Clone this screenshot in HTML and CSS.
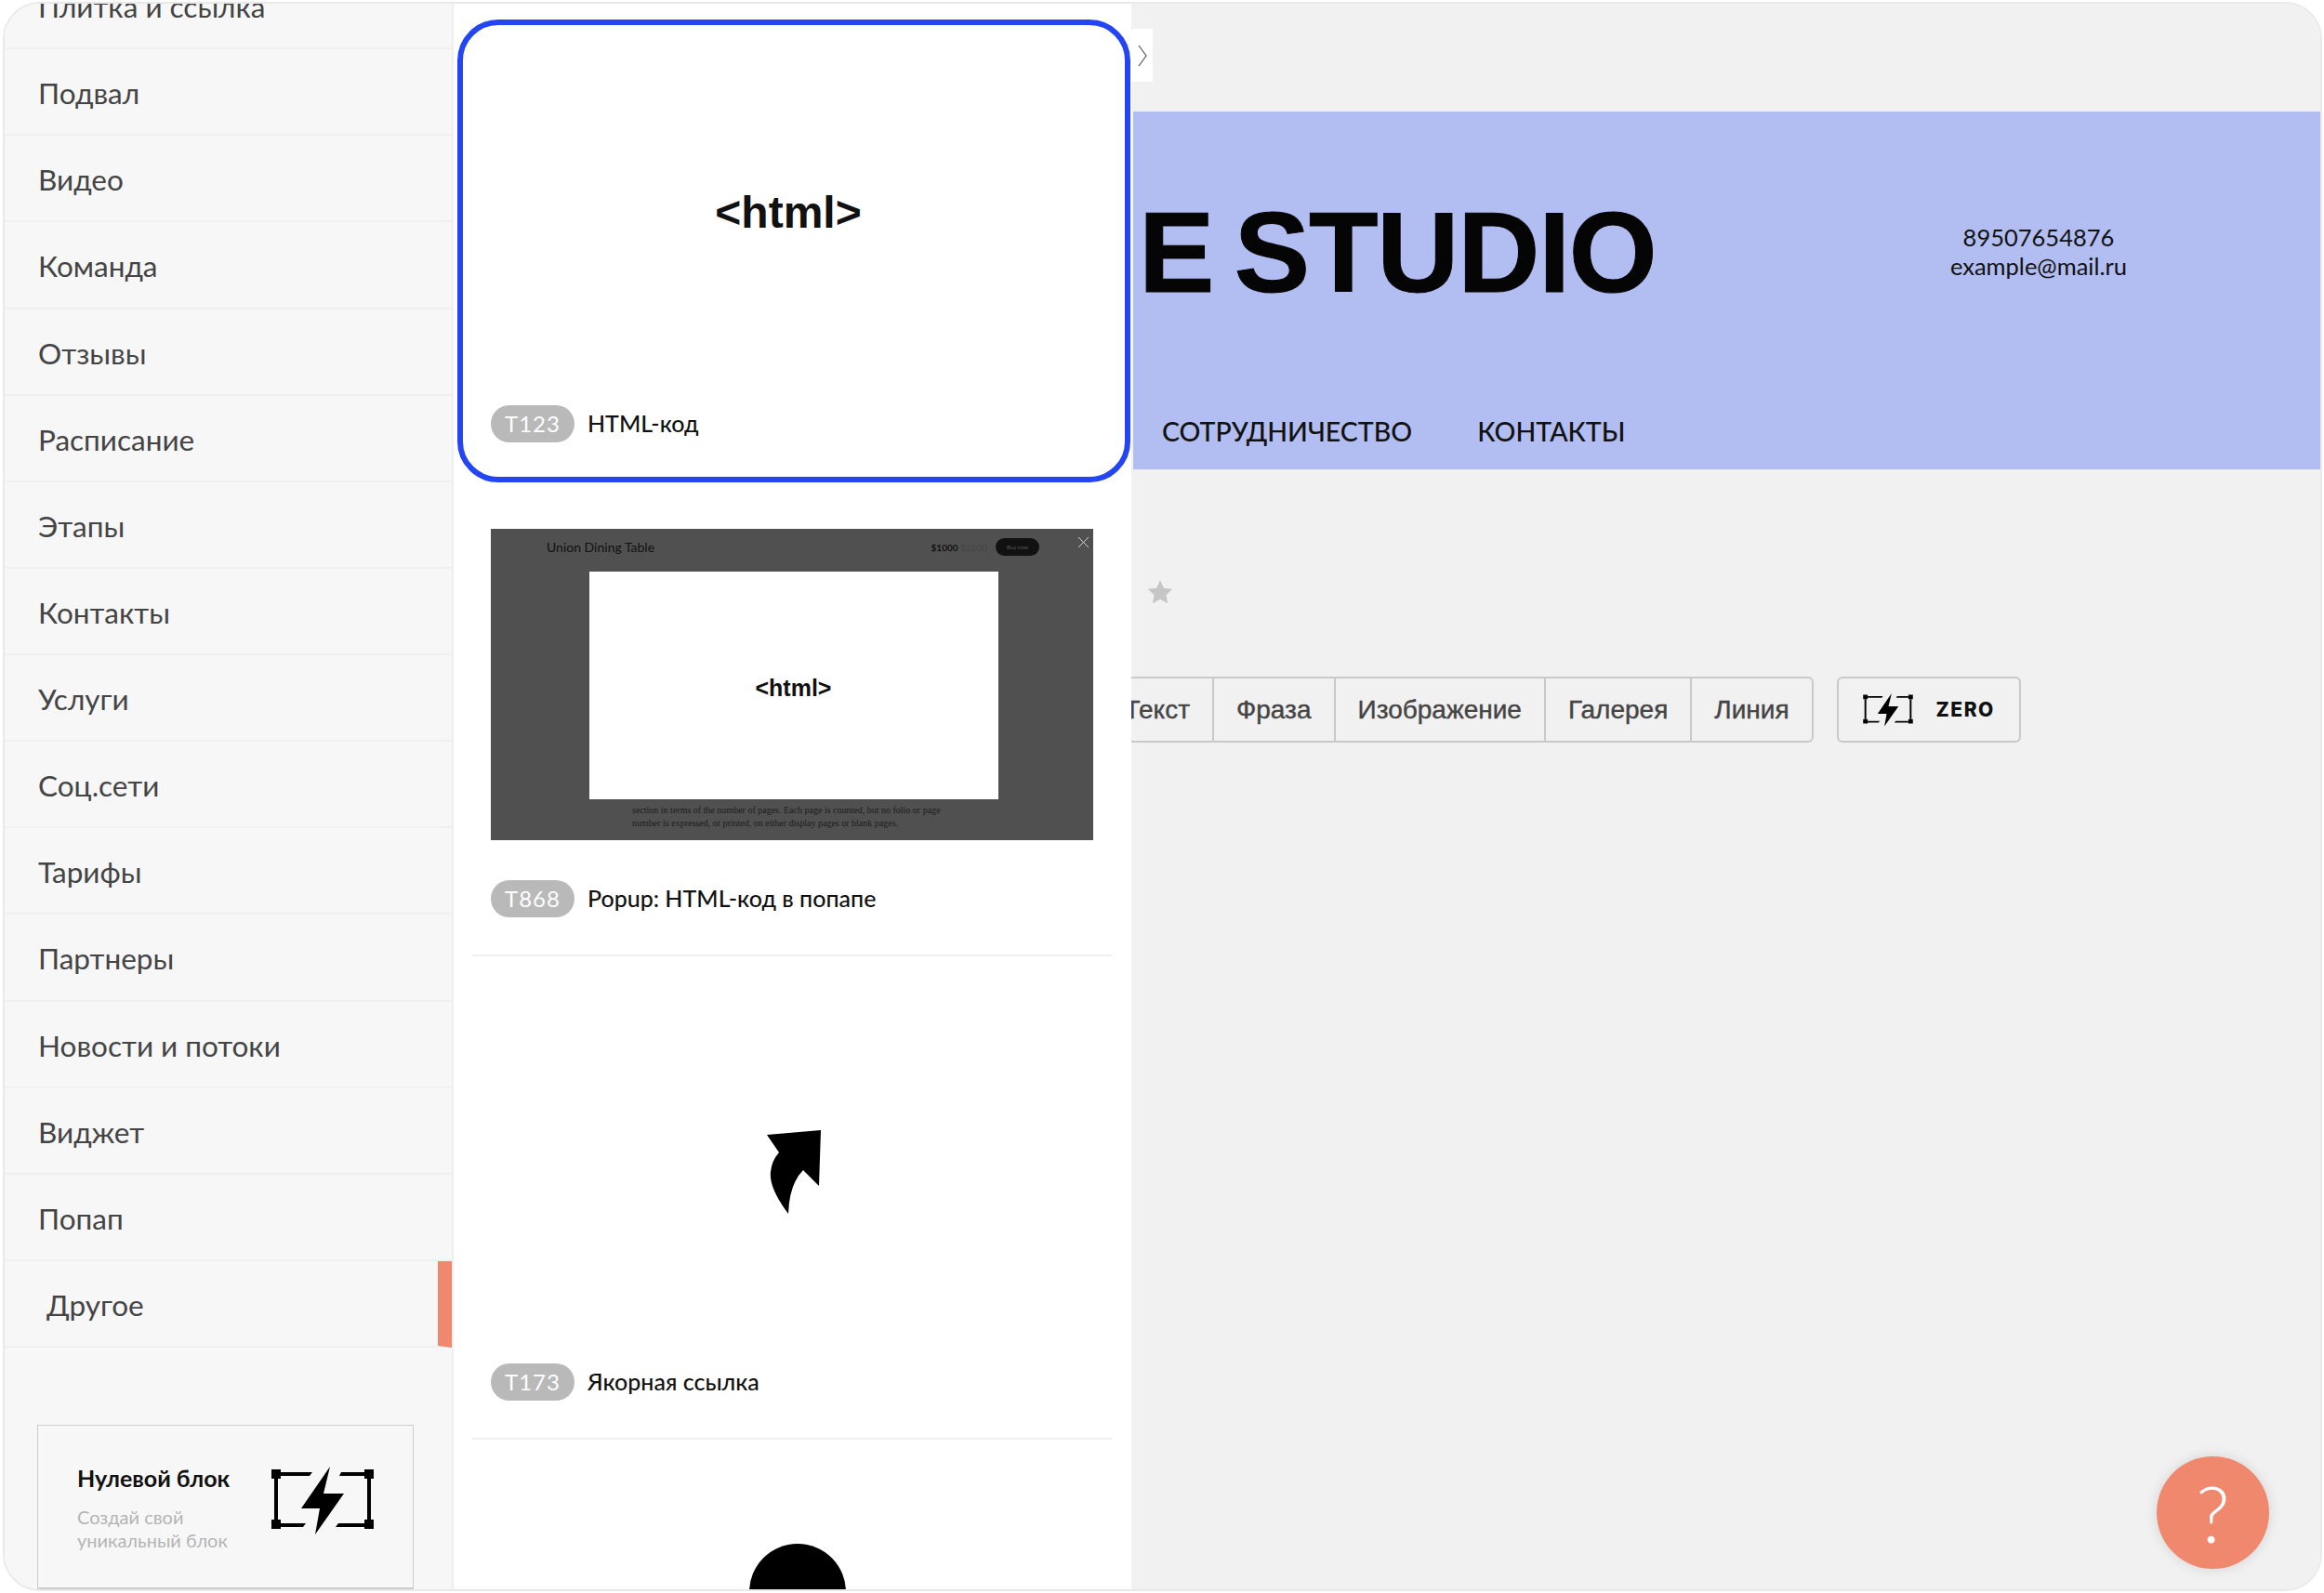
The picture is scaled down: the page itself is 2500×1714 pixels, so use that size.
FILE: index.html
```html
<!DOCTYPE html>
<html lang="ru">
<head>
  <meta charset="UTF-8" />
  <meta name="viewport" content="width=device-width, initial-scale=1.0"/>
  <title>Библиотека блоков</title>
  <link rel="stylesheet" href="styles.css">
</head>
<body>
  <div class="window">
    <aside class="sidebar">
      <ul class="cats">
        <li>Плитка и ссылка</li>
        <li>Подвал</li>
        <li>Видео</li>
        <li>Команда</li>
        <li>Отзывы</li>
        <li>Расписание</li>
        <li>Этапы</li>
        <li>Контакты</li>
        <li>Услуги</li>
        <li>Соц.сети</li>
        <li>Тарифы</li>
        <li>Партнеры</li>
        <li>Новости и потоки</li>
        <li>Виджет</li>
        <li>Попап</li>
        <li class="active">Другое</li>
      </ul>

      <div class="zero-card">
        <div>
          <div class="zero-title">Нулевой блок</div>
          <div class="zero-sub">Создай свой<br>уникальный блок</div>
        </div>
        <svg class="zero-icon" viewBox="0 0 110 74">
          <path d="M0 3h10v10H0zM100 3h10v10h-10zM0 57h10v10H0zM100 57h10v10h-10z"/>
          <path d="M10 6h34l-3 4H10zM75 6h25v4H73zM3 13h4v44H3zM103 13h4v44h-4zM10 61h27l-3 4H10zM72 61h28v4H69z"/>
          <path d="M63 0L32 45h20l-5 28 31-44H56z"/>
        </svg>
      </div>
    </aside>

    <section class="panel">
      <article class="block selected">
        <div class="thumb thumb-html"><span class="html-mark">&lt;html&gt;</span></div>
        <div class="block-meta">
          <span class="badge">T123</span>
          <span class="block-name">HTML-код</span>
        </div>
      </article>

      <article class="block">
        <div class="thumb thumb-popup">
          <div class="popup-head">
            <span class="popup-title">Union Dining Table</span>
            <span class="popup-price">$1000 <s>$3200</s></span>
            <span class="popup-buy">Buy now</span>
          </div>
          <div class="popup-body"><span class="html-mark small">&lt;html&gt;</span></div>
          <p class="popup-text">section in terms of the number of pages. Each page is counted, but no folio or page<br>number is expressed, or printed, on either display pages or blank pages.</p>
          <span class="popup-close">
            <svg viewBox="0 0 14 14"><path d="M1 1l12 12M13 1L1 13"/></svg>
          </span>
        </div>
        <div class="block-meta">
          <span class="badge">T868</span>
          <span class="block-name">Popup: HTML-код в попапе</span>
        </div>
      </article>

      <article class="block">
        <div class="thumb thumb-anchor">
          <svg class="anchor-icon" viewBox="0 0 58 90"><path d="M0 5L58 0 56 60 39 43Q24 58 23 90 2 62 4 45 5 33 13 24z"/></svg>
        </div>
        <div class="block-meta">
          <span class="badge">T173</span>
          <span class="block-name">Якорная ссылка</span>
        </div>
      </article>

      <div class="next-thumb"><span class="black-dot"></span></div>
    </section>

    <main class="preview">
      <button class="panel-tab">
        <svg viewBox="0 0 10 24"><path d="M1 1l8 11-8 11"/></svg>
      </button>

      <header class="hero">
        <div class="hero-top">
          <div class="hero-logo">E STUDIO</div>
          <div class="hero-contacts">
            <div>89507654876</div>
            <div>example@mail.ru</div>
          </div>
        </div>
        <nav class="hero-nav">
          <a>Сотрудничество</a>
          <a>Контакты</a>
        </nav>
      </header>

      <svg class="star" viewBox="0 0 24 24"><path d="M12 1l3.4 7.3 7.9 1-5.800 5.400 1.500 7.900L12 18.700l-7 3.900 1.500-7.900L.7 9.300l7.900-1z"/></svg>

      <div class="tools">
        <div class="tool-group">
          <span class="tool tool-first">Текст</span>
          <span class="tool">Фраза</span>
          <span class="tool">Изображение</span>
          <span class="tool">Галерея</span>
          <span class="tool">Линия</span>
        </div>
        <div class="tool-zero">
          <svg viewBox="0 0 110 74">
            <path d="M0 3h10v10H0zM100 3h10v10h-10zM0 57h10v10H0zM100 57h10v10h-10z"/>
            <path d="M10 6h34l-3 4H10zM75 6h25v4H73zM3 13h4v44H3zM103 13h4v44h-4zM10 61h27l-3 4H10zM72 61h28v4H69z"/>
            <path d="M63 0L32 45h20l-5 28 31-44H56z"/>
          </svg>
          <span>ZERO</span>
        </div>
      </div>

      <button class="help">?</button>
    </main>
  </div>
</body>
</html>
```

FILE: styles.css
```css
* {
  box-sizing: border-box;
}

html, body {
  height: 100%;
}

body {
  margin: 0;
  padding: 2px 2px 2px 3px;
  background: #fff;
  font-family: 'Lato', 'Noto Sans', sans-serif;
  color: #444;
}

.window {
  display: flex;
  height: 100%;
  border: 2px solid #e9e9e9;
  border-radius: 40px;
  overflow: hidden;
}

/* left column */
.sidebar {
  width: 483px;
  flex: none;
  display: flex;
  flex-direction: column;
  background: #f7f7f7;
  border-right: 2px solid #efefef;
  overflow: hidden;
}

.cats {
  list-style: none;
  margin: -44px 0 0;
  padding: 0;
}

.cats li {
  height: 93.13px;
  line-height: 94px;
  padding-left: 36px;
  font-size: 31.500px;
  color: #444;
  border-bottom: 2px solid #f0f0f0;
}

.cats li.active {
  padding-left: 45px;
  border-right: 15px solid #f0886e;
}

.zero-card {
  margin: auto 41px 0 35px;
  height: 177px;
  padding: 41px 42px 0 42px;
  display: flex;
  justify-content: space-between;
  border: 1px solid #ccc;
  border-bottom-width: 2px;
}

.zero-title {
  font-size: 25px;
  font-weight: 700;
  color: #111;
  line-height: 30px;
  margin-bottom: 15px;
}

.zero-sub {
  font-size: 20px;
  line-height: 25px;
  color: #b4b4b4;
}

.zero-icon {
  width: 110px;
  height: 74px;
  flex: none;
  margin-top: 3px;
  fill: #000;
}

/* block list */
.panel {
  width: 729px;
  flex: none;
  background: #fff;
  padding-top: 17px;
  overflow: hidden;
}

.block {
  margin: 0 21px 0 20px;
  padding: 50px 20px 40px;
  border-bottom: 2px solid #efefef;
}

.block.selected {
  margin: 0 1px 0 4px;
  padding: 44px 30px 36px;
  height: 498px;
  border: 6px solid #2445f2;
  border-radius: 44px;
}

.thumb {
  position: relative;
  display: flex;
  align-items: center;
  justify-content: center;
}

.thumb-html {
  height: 322px;
  padding: 0 12px 8px 0;
}

.thumb-anchor {
  height: 345px;
  padding: 18px 0 0 3px;
}

.thumb-popup {
  height: 335px;
  flex-direction: column;
  justify-content: flex-start;
  background: #505050;
}

.html-mark {
  font-family: 'Liberation Sans', sans-serif;
  font-weight: 700;
  font-size: 48px;
  color: #111;
}

.html-mark.small {
  font-size: 25px;
  padding-top: 5px;
}

.popup-head {
  width: 100%;
  height: 46px;
  flex: none;
  padding: 0 58px 7px 60px;
  display: flex;
  align-items: center;
  color: #111;
}

.popup-title {
  flex: 1;
  font-size: 14px;
}

.popup-price {
  font-size: 10px;
  font-weight: 700;
}

.popup-price s {
  font-weight: 400;
  color: #444;
  text-decoration: none;
}

.popup-buy {
  width: 47px;
  height: 19px;
  margin-left: 9px;
  border-radius: 10px;
  background: #111;
  color: #555;
  font-size: 6px;
  line-height: 19px;
  text-align: center;
}

.popup-body {
  width: 440px;
  height: 245px;
  flex: none;
  margin-left: 3px;
  display: flex;
  align-items: center;
  justify-content: center;
  background: #fff;
}

.popup-text {
  width: 440px;
  margin: 5px 0 0;
  padding-left: 48px;
  font-family: 'Liberation Serif', serif;
  font-size: 10px;
  line-height: 14px;
  white-space: nowrap;
  color: #1c1c1c;
}

.popup-close {
  position: absolute;
  top: 8px;
  right: 4px;
  width: 13px;
  height: 13px;
}

.popup-close svg {
  display: block;
  stroke: #ddd;
  stroke-width: 1;
  fill: none;
}

.anchor-icon {
  width: 58px;
  height: 90px;
  fill: #000;
}

.block-meta {
  display: flex;
  align-items: center;
  gap: 14px;
  margin-top: 43px;
}

.badge {
  height: 40px;
  padding: 0 15px;
  border-radius: 20px;
  background: #b9b9b9;
  color: #fff;
  font-size: 24px;
  line-height: 40px;
  letter-spacing: 1px;
}

.block-name {
  padding-bottom: 3px;
  font-size: 25px;
  font-weight: 500;
  color: #111;
}

.next-thumb {
  display: flex;
  justify-content: center;
  padding-top: 112px;
  padding-left: 10px;
}

.black-dot {
  width: 104px;
  height: 104px;
  border-radius: 50%;
  background: #000;
}

/* page preview */
.preview {
  position: relative;
  flex: 1;
  min-width: 0;
  padding-top: 116px;
  background: #f1f1f1;
  overflow: hidden;
}

.panel-tab {
  position: absolute;
  top: 27px;
  left: 0;
  width: 23px;
  height: 57px;
  padding: 0;
  border: none;
  background: #fff;
}

.panel-tab svg {
  display: block;
  width: 10px;
  height: 24px;
  margin: 0 6px 0 auto;
  fill: none;
  stroke: #555;
  stroke-width: 1.200;
}

.hero {
  height: 385px;
  margin-left: 2px;
  padding: 0 0 0 6px;
  display: flex;
  flex-direction: column;
  background: #b2bdf1;
  color: #111;
}

.hero-top {
  flex: 1;
  display: flex;
  align-items: flex-start;
  justify-content: space-between;
  padding-right: 208px;
}

.hero-logo {
  margin-top: 88px;
  font-family: 'Liberation Sans', sans-serif;
  font-size: 122px;
  font-weight: 700;
  line-height: 128px;
  letter-spacing: -1.200px;
  word-spacing: -10px;
  color: #050505;
  -webkit-text-stroke: 1px #050505;
}

.hero-contacts {
  margin-top: 120px;
  font-size: 25.500px;
  line-height: 31px;
  text-align: center;
}

.hero-nav {
  display: flex;
  gap: 70px;
  padding: 0 0 24px 25px;
  font-size: 28.500px;
  font-weight: 500;
  text-transform: uppercase;
}

.star {
  display: block;
  width: 30px;
  height: 28px;
  margin: 118px 0 0 16px;
  fill: #c6c6c6;
}

.tools {
  display: flex;
  gap: 25px;
  margin: 77px 0 0 -60px;
}

.tool-group {
  display: flex;
  height: 71px;
  border: 2px solid #c9c9c9;
  border-radius: 6px;
}

.tool {
  padding: 0 24px;
  line-height: 67px;
  font-family: 'Liberation Sans', sans-serif;
  font-size: 28px;
  color: #444;
  border-left: 2px solid #c9c9c9;
  -webkit-text-stroke: 0.400px #444;
}

.tool-first {
  width: 145px;
  text-align: right;
  border-left: none;
}

.tool-zero {
  display: flex;
  align-items: center;
  gap: 25px;
  width: 198px;
  height: 71px;
  padding-left: 26px;
  border: 2px solid #c9c9c9;
  border-radius: 6px;
  font-family: 'Inter', sans-serif;
  font-size: 21px;
  font-weight: 800;
  letter-spacing: 1.500px;
  color: #111;
}

.tool-zero svg {
  width: 54px;
  height: 36px;
  flex: none;
  fill: #000;
}

.help {
  position: absolute;
  right: 55px;
  bottom: 22px;
  width: 121px;
  height: 121px;
  padding: 0;
  border: none;
  border-radius: 50%;
  background: #f0886e;
  box-shadow: 0 0 14px rgba(0, 0, 0, 0.12);
  color: #fff;
  font-family: 'Lato', sans-serif;
  font-size: 84px;
  font-weight: 300;
  line-height: 121px;
}
```
